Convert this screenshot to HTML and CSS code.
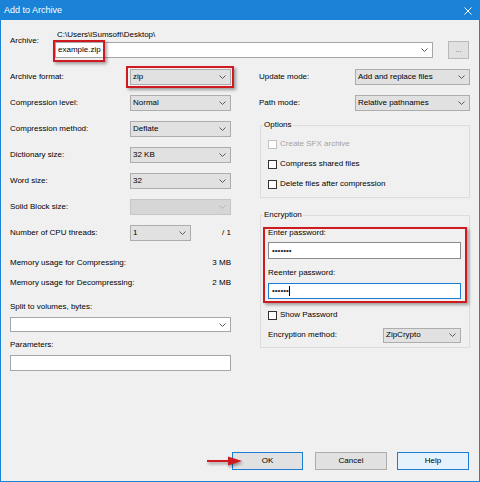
FILE: index.html
```html
<!DOCTYPE html>
<html>
<head>
<meta charset="utf-8">
<title>Add to Archive</title>
<link rel="stylesheet" href="styles.css">
</head>
<body>
<div class="window">
  <div class="titlebar">
    <span class="title">Add to Archive</span>
    <svg class="close" viewBox="0 0 8 8"><path d="M0.5 0.5 L7.5 7.5 M7.5 0.5 L0.5 7.5" stroke="#fff" stroke-width="1" fill="none"/></svg>
  </div>
  <div class="content">
    <div class="archive">
      <div class="archive-label">Archive:</div>
      <div class="archive-main">
        <div class="path">C:\Users\iSumsoft\Desktop\</div>
        <div class="archive-inputs">
          <div class="combo edit grow"><span>example.zip</span><svg class="chev" viewBox="0 0 7 4"><polyline points="0.5,0.5 3.5,3.5 6.5,0.5"/></svg></div>
          <div class="dots-btn">...</div>
        </div>
      </div>
    </div>

    <div class="columns">
      <div class="col left">
        <div class="row"><span>Archive format:</span><div class="combo"><span>zip</span><svg class="chev" viewBox="0 0 7 4"><polyline points="0.5,0.5 3.5,3.5 6.5,0.5"/></svg></div></div>
        <div class="row"><span>Compression level:</span><div class="combo"><span>Normal</span><svg class="chev" viewBox="0 0 7 4"><polyline points="0.5,0.5 3.5,3.5 6.5,0.5"/></svg></div></div>
        <div class="row"><span>Compression method:</span><div class="combo"><span>Deflate</span><svg class="chev" viewBox="0 0 7 4"><polyline points="0.5,0.5 3.5,3.5 6.5,0.5"/></svg></div></div>
        <div class="row"><span>Dictionary size:</span><div class="combo"><span>32 KB</span><svg class="chev" viewBox="0 0 7 4"><polyline points="0.5,0.5 3.5,3.5 6.5,0.5"/></svg></div></div>
        <div class="row"><span>Word size:</span><div class="combo"><span>32</span><svg class="chev" viewBox="0 0 7 4"><polyline points="0.5,0.5 3.5,3.5 6.5,0.5"/></svg></div></div>
        <div class="row"><span>Solid Block size:</span><div class="combo disabled"><span></span><svg class="chev" viewBox="0 0 7 4"><polyline points="0.5,0.5 3.5,3.5 6.5,0.5"/></svg></div></div>
        <div class="row"><span class="grow">Number of CPU threads:</span><div class="combo narrow"><span>1</span><svg class="chev" viewBox="0 0 7 4"><polyline points="0.5,0.5 3.5,3.5 6.5,0.5"/></svg></div><span class="threads">/ 1</span></div>
        <div class="mem first"><span>Memory usage for Compressing:</span><span>3 MB</span></div>
        <div class="mem"><span>Memory usage for Decompressing:</span><span>2 MB</span></div>
        <div class="field-label split-label">Split to volumes, bytes:</div>
        <div class="combo edit split"><span></span><svg class="chev" viewBox="0 0 7 4"><polyline points="0.5,0.5 3.5,3.5 6.5,0.5"/></svg></div>
        <div class="field-label params-label">Parameters:</div>
        <div class="textbox params"></div>
      </div>

      <div class="col right">
        <div class="row"><span>Update mode:</span><div class="combo"><span>Add and replace files</span><svg class="chev" viewBox="0 0 7 4"><polyline points="0.5,0.5 3.5,3.5 6.5,0.5"/></svg></div></div>
        <div class="row"><span>Path mode:</span><div class="combo"><span>Relative pathnames</span><svg class="chev" viewBox="0 0 7 4"><polyline points="0.5,0.5 3.5,3.5 6.5,0.5"/></svg></div></div>
        <fieldset class="group options">
          <legend>Options</legend>
          <div class="group-body opt-body">
            <div class="check disabled"><span class="box"></span><span>Create SFX archive</span></div>
            <div class="check"><span class="box"></span><span>Compress shared files</span></div>
            <div class="check"><span class="box"></span><span>Delete files after compression</span></div>
          </div>
        </fieldset>
        <fieldset class="group encryption">
          <legend>Encryption</legend>
          <div class="group-body enc-body">
            <div class="enc-label">Enter password:</div>
            <div class="textbox pw1"><span class="dots">&bull;&bull;&bull;&bull;&bull;&bull;&bull;</span></div>
            <div class="enc-label second">Reenter password:</div>
            <div class="textbox pw2 focused"><span class="dots">&bull;&bull;&bull;&bull;&bull;&bull;</span><span class="caret"></span></div>
            <div class="check show"><span class="box"></span><span>Show Password</span></div>
            <div class="enc-row"><span>Encryption method:</span><div class="combo enc"><span>ZipCrypto</span><svg class="chev" viewBox="0 0 7 4"><polyline points="0.5,0.5 3.5,3.5 6.5,0.5"/></svg></div></div>
          </div>
        </fieldset>
      </div>
    </div>

    <div class="buttons">
      <div class="btn default ok">OK</div>
      <div class="btn cancel">Cancel</div>
      <div class="btn hover help">Help</div>
    </div>
  </div>

  <div class="mark mark-name"></div>
  <div class="mark mark-format"></div>
  <div class="mark mark-pass"></div>
  <svg class="arrow" viewBox="0 0 38 12"><line x1="1" y1="6" x2="24" y2="6" stroke="#cf1a20" stroke-width="2"/><polygon points="22,1.5 36,6 22,10.5" fill="#cf1a20"/></svg>
</div>
</body>
</html>
```

FILE: styles.css
```css
html, body {
  margin: 0;
  padding: 0;
}
body {
  width: 480px;
  height: 482px;
  overflow: hidden;
  font-family: "Liberation Sans", Arial, sans-serif;
  font-size: 8px;
  line-height: 10px;
  color: #000;
  background: #f0f0f0;
}
.window {
  position: relative;
  width: 480px;
  height: 482px;
  box-sizing: border-box;
  border: 1px solid #1a83d7;
  border-top: 0;
  background: #f0f0f0;
  display: flex;
  flex-direction: column;
}
.titlebar {
  height: 20px;
  margin: 0 -1px;
  background: #1a83d7;
  display: flex;
  align-items: center;
  justify-content: space-between;
  padding: 1px 8px 0 4px;
  box-sizing: border-box;
  flex: none;
}
.title {
  color: #fff;
  font-size: 9px;
  line-height: 11px;
}
.close {
  width: 8px;
  height: 8px;
  display: block;
}
.content {
  flex: 1;
  display: flex;
  flex-direction: column;
  padding: 0 9px;
}

/* archive */
.archive {
  display: flex;
  margin-top: 10px;
}
.archive-label {
  width: 45px;
  flex: none;
  margin-top: 6px;
}
.archive-main {
  flex: 1;
  display: flex;
  flex-direction: column;
  gap: 1px;
}
.path {
  padding-left: 2px;
}
.archive-inputs {
  display: flex;
  align-items: center;
  gap: 15px;
}
.grow {
  flex: 1;
}
.dots-btn {
  width: 21px;
  height: 18px;
  margin-right: 1px;
  box-sizing: border-box;
  border: 1px solid #b9b9b9;
  background: #e1e1e1;
  color: #777;
  display: flex;
  align-items: center;
  justify-content: center;
  font-size: 8px;
  padding-bottom: 1px;
}

/* combos */
.combo {
  height: 16px;
  box-sizing: border-box;
  border: 1px solid #adadad;
  background: #e1e1e1;
  display: flex;
  align-items: center;
  justify-content: space-between;
  padding: 0 4px 0 2px;
  width: 101px;
  flex: none;
}
.combo.grow {
  flex: 1;
  width: auto;
}
.combo.edit {
  background: #fff;
  border-color: #a6a6a6;
}
.combo.disabled {
  background: #d6d6d6;
  border-color: #c6c6c6;
}
.combo.disabled .chev polyline {
  stroke: #b4b4b4;
}
.chev {
  width: 7px;
  height: 4px;
  display: block;
  flex: none;
}
.chev polyline {
  fill: none;
  stroke: #5a5a5a;
  stroke-width: 1;
}

/* columns */
.columns {
  display: grid;
  grid-template-columns: 221px 1fr;
  column-gap: 28px;
  margin-top: 5px;
}
.col {
  display: flex;
  flex-direction: column;
}
.row {
  height: 26px;
  display: flex;
  align-items: center;
  justify-content: space-between;
}
.right .row .combo {
  width: 115px;
}
.combo.narrow {
  width: 61px;
}
.threads {
  width: 40px;
  text-align: right;
}
.mem {
  height: 20px;
  display: flex;
  align-items: center;
  justify-content: space-between;
}
.mem.first {
  margin-top: 7px;
}
.split-label {
  margin-top: 9px;
}
.combo.split {
  width: auto;
  height: 15px;
  margin-top: 5px;
}
.params-label {
  margin-top: 8px;
}
.textbox {
  height: 16px;
  box-sizing: border-box;
  border: 1px solid #a6a6a6;
  background: #fff;
  display: flex;
  align-items: center;
  padding-left: 3px;
}
.textbox.params {
  margin-top: 5px;
}

/* group boxes */
.group {
  margin: 4px 0 0 1px;
  padding: 0;
  border: 1px solid #dcdcdc;
  min-width: 0;
}
.group legend {
  margin-left: 2px;
  padding: 0 1px;
  font-size: 8px;
  line-height: 10px;
}
.opt-body {
  padding: 4px 8px 3px 7px;
}
.check {
  height: 20px;
  display: flex;
  align-items: center;
}
.box {
  width: 9px;
  height: 9px;
  box-sizing: border-box;
  border: 1px solid #333;
  background: #fff;
  margin-right: 3px;
  flex: none;
}
.check.disabled {
  color: #a3a3a3;
}
.check.disabled .box {
  border-color: #c2c2c2;
}
.group.encryption {
  margin-top: 12px;
}
.enc-body {
  padding: 8px 8px 4px 7px;
}
.textbox.pw1 {
  margin-top: 4px;
  height: 17px;
  border-color: #8a8a8a;
}
.enc-label.second {
  margin-top: 9px;
}
.textbox.pw2 {
  margin-top: 5px;
}
.textbox.focused {
  border-color: #1a7fd4;
}
.dots {
  font-size: 8px;
  line-height: 8px;
  color: #222;
}
.caret {
  width: 1px;
  height: 10px;
  background: #000;
  margin-left: 0;
}
.check.show {
  margin-top: 9px;
  height: 14px;
}
.enc-row {
  margin-top: 5px;
  height: 16px;
  display: flex;
  align-items: center;
  justify-content: space-between;
}
.combo.enc {
  width: 78px;
  height: 15px;
}

/* buttons */
.buttons {
  margin-top: auto;
  display: flex;
  justify-content: flex-end;
  padding-bottom: 11px;
  padding-right: 1px;
}
.btn {
  height: 18px;
  width: 72px;
  box-sizing: border-box;
  border: 1px solid #adadad;
  background: #e1e1e1;
  display: flex;
  align-items: center;
  justify-content: center;
}
.btn.ok {
  width: 71px;
  margin-right: 12px;
}
.btn.cancel {
  margin-right: 10px;
}
.btn.default {
  border-color: #1a7fd4;
}
.btn.hover {
  background: #e5f1fb;
  border-color: #1a7fd4;
}

/* annotation overlays */
.mark {
  position: absolute;
  box-sizing: border-box;
  border: 2px solid #cf1a20;
  box-shadow: 2px 2px 3px rgba(0, 0, 0, 0.35);
}
.mark-name {
  left: 52px;
  top: 40px;
  width: 52px;
  height: 22px;
}
.mark-format {
  left: 125px;
  top: 66px;
  width: 108px;
  height: 22px;
}
.mark-pass {
  left: 262px;
  top: 227px;
  width: 204px;
  height: 76px;
}
.arrow {
  position: absolute;
  left: 205px;
  top: 455px;
  width: 38px;
  height: 12px;
  filter: drop-shadow(1px 2px 1.5px rgba(0, 0, 0, 0.4));
}
```
